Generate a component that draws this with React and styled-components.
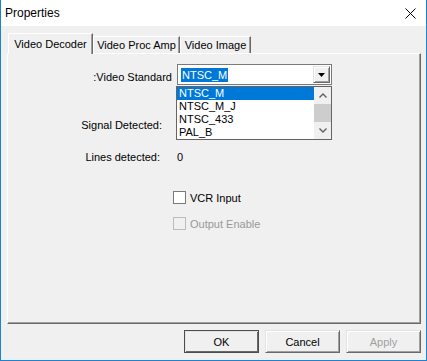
import React from "react";
import styled, { createGlobalStyle } from "styled-components";

const GlobalStyle = createGlobalStyle`
  html, body {
    margin: 0;
    padding: 0;
    background: #f0f0f0;
  }
  body {
    font-family: "Liberation Sans", Arial, sans-serif;
    font-size: 11px;
    color: #000;
  }
`;

const Window = styled.div`
  box-sizing: border-box;
  width: 427px;
  height: 361px;
  display: flex;
  flex-direction: column;
  background: #f0f0f0;
  border: 1px solid #1883d7;
  border-top: none;
`;

const TitleBar = styled.div`
  flex: none;
  height: 26px;
  display: flex;
  align-items: center;
  justify-content: space-between;
  padding: 0 10px 0 4px;
  background: #fff;
  font-size: 12px;
`;

const Body = styled.div`
  flex: 1;
  display: flex;
  flex-direction: column;
  padding: 7px 5px 7px 6px;
`;

const TabStrip = styled.div`
  display: flex;
  align-items: flex-end;
  height: 20px;
  padding-left: 1px;
`;

const Tab = styled.div`
  position: relative;
  z-index: ${(p) => (p.active ? 1 : 0)};
  box-sizing: border-box;
  width: ${(p) => p.w}px;
  height: ${(p) => (p.active ? 21 : 17)}px;
  margin-bottom: ${(p) => (p.active ? -1 : 0)}px;
  display: flex;
  align-items: center;
  justify-content: center;
  background: #f0f0f0;
  border-top: 1px solid #fff;
  border-left: 1px solid #fff;
  border-right: 1px solid #696969;
  box-shadow: inset -1px 0 #a0a0a0;
`;

const Panel = styled.div`
  box-sizing: border-box;
  height: 271px;
  display: flex;
  flex-direction: column;
  border-top: 1px solid #fff;
  border-left: 1px solid #fff;
  border-right: 1px solid #696969;
  border-bottom: 1px solid #696969;
  box-shadow: inset -1px -1px #a0a0a0;
`;

const FieldRow = styled.div`
  display: flex;
  align-items: center;
  height: ${(p) => p.h}px;
  margin-top: ${(p) => p.top}px;
`;

const FieldLabel = styled.div`
  flex: none;
  box-sizing: border-box;
  width: 169px;
  text-align: right;
  padding-right: ${(p) => p.pr}px;
  padding-top: ${(p) => p.dy || 0}px;
`;

const Combo = styled.div`
  position: relative;
  box-sizing: border-box;
  width: 155px;
  height: 21px;
  display: flex;
  padding: 1px;
  background: #fff;
  border: 1px solid #7a7a7a;
`;

const ComboText = styled.div`
  flex: 1;
  display: flex;
  align-items: center;
  padding-left: 2px;
`;

const Selection = styled.span`
  background: #0078d7;
  color: #fff;
  line-height: 14px;
  padding: 0 1px;
`;

const DropButton = styled.div`
  box-sizing: border-box;
  width: 17px;
  display: flex;
  align-items: center;
  justify-content: center;
  background: #f0f0f0;
  border: 1px solid;
  border-color: #e3e3e3 #696969 #696969 #e3e3e3;
  box-shadow: inset 1px 1px #fff, inset -1px -1px #a0a0a0;
`;

const DropList = styled.div`
  position: absolute;
  left: -2px;
  top: 21px;
  z-index: 2;
  box-sizing: border-box;
  width: 156px;
  height: 54px;
  display: flex;
  background: #fff;
  border: 1px solid #646464;
`;

const Items = styled.div`
  flex: 1;
  display: flex;
  flex-direction: column;
`;

const Item = styled.div`
  height: 13px;
  line-height: 13px;
  padding-left: 2px;
  background: ${(p) => (p.selected ? "#0078d7" : "transparent")};
  color: ${(p) => (p.selected ? "#fff" : "#000")};
`;

const ScrollBar = styled.div`
  width: 17px;
  display: flex;
  flex-direction: column;
  background: #f0f0f0;
`;

const ScrollArrow = styled.div`
  height: 17px;
  display: flex;
  align-items: center;
  justify-content: center;
`;

const ScrollThumb = styled.div`
  flex: 1;
  background: #cdcdcd;
`;

const CheckRow = styled.label`
  display: flex;
  align-items: center;
  gap: 4px;
  height: 13px;
  margin-top: ${(p) => p.top}px;
  margin-left: 165px;
  color: ${(p) => (p.disabled ? "#999" : "#000")};
`;

const Box = styled.span`
  box-sizing: border-box;
  width: 13px;
  height: 13px;
  background: ${(p) => (p.disabled ? "#f0f0f0" : "#fff")};
  border: 1px solid ${(p) => (p.disabled ? "#bcbcbc" : "#7a7a7a")};
`;

const ButtonRow = styled.div`
  display: flex;
  justify-content: flex-end;
  gap: 6px;
  margin-top: 6px;
`;

const Button = styled.div`
  box-sizing: border-box;
  width: 75px;
  height: 23px;
  display: flex;
  align-items: center;
  justify-content: center;
  background: #f0f0f0;
  color: ${(p) => (p.disabled ? "#a0a0a0" : "#000")};
  border: 1px solid;
  border-color: ${(p) =>
    p.primary ? "#4d4d4d" : "#e3e3e3 #696969 #696969 #e3e3e3"};
  box-shadow: ${(p) =>
    p.primary
      ? "inset 1px 1px #e3e3e3, inset -1px -1px #696969"
      : "inset 1px 1px #fff, inset -1px -1px #a0a0a0"};
`;

const standards = ["NTSC_M", "NTSC_M_J", "NTSC_433", "PAL_B"];

export default function App() {
  return (
    <>
      <GlobalStyle />
      <Window>
        <TitleBar>
          <span>Properties</span>
          <svg width="11" height="11" viewBox="0 0 11 11">
            <path d="M0.5 0.5 L10.5 10.5 M10.5 0.5 L0.5 10.5" stroke="#000" strokeWidth="1" />
          </svg>
        </TitleBar>
        <Body>
          <TabStrip>
            <Tab active w={85}>Video Decoder</Tab>
            <Tab w={87}>Video Proc Amp</Tab>
            <Tab w={71}>Video Image</Tab>
          </TabStrip>
          <Panel>
            <FieldRow top={10} h={21}>
              <FieldLabel pr={5} dy={5}>:Video Standard</FieldLabel>
              <Combo>
                <ComboText>
                  <Selection>NTSC_M</Selection>
                </ComboText>
                <DropButton>
                  <svg width="7" height="4" viewBox="0 0 7 4">
                    <polygon points="0,0 7,0 3.5,4" fill="#000" />
                  </svg>
                </DropButton>
                <DropList>
                  <Items>
                    {standards.map((s, i) => (
                      <Item key={s} selected={i === 0}>{s}</Item>
                    ))}
                  </Items>
                  <ScrollBar>
                    <ScrollArrow>
                      <svg width="8" height="5" viewBox="0 0 8 5">
                        <polyline points="0.5,4.5 4,1 7.5,4.5" fill="none" stroke="#606060" strokeWidth="1.4" />
                      </svg>
                    </ScrollArrow>
                    <ScrollThumb />
                    <ScrollArrow>
                      <svg width="8" height="5" viewBox="0 0 8 5">
                        <polyline points="0.5,0.5 4,4 7.5,0.5" fill="none" stroke="#606060" strokeWidth="1.4" />
                      </svg>
                    </ScrollArrow>
                  </ScrollBar>
                </DropList>
              </Combo>
            </FieldRow>
            <FieldRow top={33} h={13}>
              <FieldLabel pr={15}>Signal Detected:</FieldLabel>
            </FieldRow>
            <FieldRow top={19} h={13}>
              <FieldLabel pr={17}>Lines detected:</FieldLabel>
              <span>0</span>
            </FieldRow>
            <CheckRow top={28}>
              <Box />
              VCR Input
            </CheckRow>
            <CheckRow top={13} disabled>
              <Box disabled />
              Output Enable
            </CheckRow>
          </Panel>
          <ButtonRow>
            <Button primary>OK</Button>
            <Button>Cancel</Button>
            <Button disabled>Apply</Button>
          </ButtonRow>
        </Body>
      </Window>
    </>
  );
}
